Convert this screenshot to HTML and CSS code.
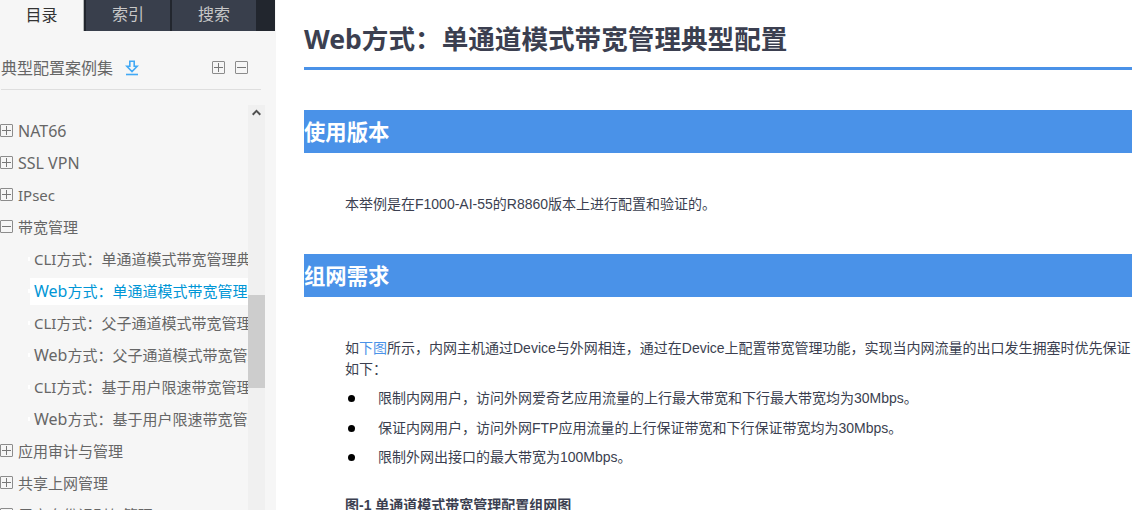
FILE: index.html
```
<!DOCTYPE html>
<html lang="zh-CN">
<head>
    <meta charset="UTF-8">
    <title>Web方式：单通道模式带宽管理典型配置</title>
    <link rel="stylesheet" href="styles.css">
</head>
<body>

<!-- Left navigation -->
<aside class="sidebar">
    <ul class="tabs">
        <li class="active">目录</li>
        <li>索引</li>
        <li>搜索</li>
    </ul>

    <div class="book">
        <span class="book-name">典型配置案例集</span>
        <svg class="download" width="14" height="16" viewBox="0 0 14 16" fill="none" stroke="#42a9f5" stroke-width="1.6">
            <path d="M4.8 1.3h4.4v5h3L7 11.6 1.8 6.300h3z"/>
            <path d="M1 14.500h12"/>
        </svg>
        <span class="box plus"></span>
        <span class="box"></span>
    </div>

    <div class="tree-wrap">
        <ul class="tree">
            <li><span class="box plus"></span><a class="en">NAT66</a></li>
            <li><span class="box plus"></span><a class="en">SSL VPN</a></li>
            <li><span class="box plus"></span><a>IPsec</a></li>
            <li><span class="box"></span><a>带宽管理</a></li>
            <li class="sub"><a>CLI方式：单通道模式带宽管理典</a></li>
            <li class="sub current"><a><span class="en">Web</span>方式：单通道模式带宽管理</a></li>
            <li class="sub"><a>CLI方式：父子通道模式带宽管理</a></li>
            <li class="sub"><a><span class="en">Web</span>方式：父子通道模式带宽管理</a></li>
            <li class="sub"><a>CLI方式：基于用户限速带宽管理</a></li>
            <li class="sub"><a><span class="en">Web</span>方式：基于用户限速带宽管理</a></li>
            <li><span class="box plus"></span><a>应用审计与管理</a></li>
            <li><span class="box plus"></span><a>共享上网管理</a></li>
            <li><span class="box plus"></span><a>用户身份识别与管理</a></li>
        </ul>
        <div class="scrollbar">
            <svg class="arrow" width="9" height="7" viewBox="0 0 9 7" fill="none" stroke="#505050" stroke-width="2">
                <path d="M0.700 5.700L4.500 1.900 8.300 5.700"/>
            </svg>
            <div class="thumb"></div>
        </div>
    </div>
</aside>

<!-- Article -->
<main class="content">
    <h1>Web方式：单通道模式带宽管理典型配置</h1>

    <h2>使用版本</h2>
    <p>本举例是在F1000-AI-55的R8860版本上进行配置和验证的。</p>

    <h2>组网需求</h2>
    <p>如<a href="#fig1">下图</a>所示，内网主机通过Device与外网相连，通过在Device上配置带宽管理功能，实现当内网流量的出口发生拥塞时优先保证<br>如下：</p>
    <ul class="needs">
        <li>限制内网用户，访问外网爱奇艺应用流量的上行最大带宽和下行最大带宽均为30Mbps。</li>
        <li>保证内网用户，访问外网FTP应用流量的上行保证带宽和下行保证带宽均为30Mbps。</li>
        <li>限制外网出接口的最大带宽为100Mbps。</li>
    </ul>
    <h5 id="fig1">图-1 单通道模式带宽管理配置组网图</h5>
</main>

</body>
</html>
```
FILE: styles.css
```
* {
    box-sizing: border-box;
}

body {
    margin: 0;
    height: 510px;
    display: flex;
    overflow: hidden;
    background-color: #fff;
    font-family: "Liberation Sans", "Noto Sans CJK SC", sans-serif;
}

ul {
    list-style: none;
    margin: 0;
    padding: 0;
}

/* Sidebar */
.sidebar {
    width: 276px;
    flex-shrink: 0;
    display: flex;
    flex-direction: column;
    background-color: #f6f6f6;
    color: #666;
    font-family: "Noto Sans", "Noto Sans CJK SC", sans-serif;
}

.tabs {
    display: flex;
    width: 275px;
    height: 31px;
    flex-shrink: 0;
    background-color: #22262e;
    color: #c8c8c8;
    font-size: 16px;
    line-height: 29px;
    text-align: center;
}

.tabs li {
    width: 84px;
    margin-left: 2px;
    background-color: #393f4c;
}

.tabs li.active {
    margin-left: 0;
    border-right: 1px solid #b5b8b8;
    background-color: #f6f6f6;
    color: #333;
    line-height: 31px;
}

.book {
    display: flex;
    align-items: center;
    width: 260px;
    height: 59px;
    flex-shrink: 0;
    margin-left: 1px;
    padding: 15px 13px 0 0;
    border-bottom: 1px solid #dedede;
    font-size: 16px;
}

.book-name {
    margin-top: -2px;
}

.download {
    margin-left: 12px;
    margin-right: auto;
}

.box {
    position: relative;
    width: 13px;
    height: 13px;
    flex-shrink: 0;
    border: 1px solid #8c8c8c;
    border-radius: 1px;
}

.book .box + .box {
    margin-left: 10px;
}

/* Horizontal and vertical strokes of the toggle */
.box::before,
.box.plus::after {
    content: "";
    position: absolute;
    left: 1px;
    top: 5px;
    width: 9px;
    height: 1px;
    background-color: #777;
}

.box.plus::after {
    left: 5px;
    top: 1px;
    width: 1px;
    height: 9px;
}

/* Tree */
.tree-wrap {
    display: flex;
    flex: 1;
    min-height: 0;
    width: 265px;
    margin-top: 15px;
}

.tree {
    width: 248px;
    padding-top: 10px;
    overflow: hidden;
    font-size: 15px;
}

.tree li {
    display: flex;
    align-items: center;
    height: 32px;
    white-space: nowrap;
}

.tree a {
    line-height: 32px;
}

.tree .en {
    font-size: 16px;
}

.tree .box {
    margin-right: 5px;
    margin-top: -2px;
}

.tree .sub {
    padding-left: 28px;
}

.tree .sub::before {
    content: "";
    width: 2px;
    height: 4px;
    flex-shrink: 0;
    background-color: #fff;
}

.tree .sub a {
    flex: 1;
    height: 27px;
    line-height: 27px;
    padding-left: 4px;
}

.tree .sub .en {
    line-height: 20px;
}

.tree .current a {
    background-color: #fff;
    color: #0096d6;
}

.scrollbar {
    width: 17px;
    background-color: #f0f0f0;
}

.arrow {
    display: block;
    margin: 4px 0 0 4px;
}

.thumb {
    height: 93px;
    margin-top: 179px;
    background-color: #cdcdcd;
}

/* Article */
.content {
    flex: 1;
    min-width: 0;
    padding-left: 28px;
    color: #3b3f50;
    font-size: 14px;
    line-height: 21px;
    white-space: nowrap;
}

.content h1 {
    height: 70px;
    margin: 0 0 40px;
    padding-top: 19px;
    border-bottom: 3px solid #4a92e8;
    font-family: "Noto Sans", "Noto Sans CJK SC", sans-serif;
    font-size: 26.6px;
    line-height: 40px;
}

.content h2 {
    height: 43px;
    margin: 0 0 41px;
    background-color: #4a92e8;
    color: #fff;
    font-size: 21.33px;
    line-height: 47px;
}

.content p {
    margin: 0 0 39px 41px;
}

.content a {
    color: #4a92e8;
    text-decoration: none;
}

.content h2 + p + ul {
    margin-top: -31px;
}

.needs li {
    display: flex;
    align-items: center;
    margin: 0 0 8.5px 44px;
}

.needs li::before {
    content: "";
    width: 7px;
    height: 7px;
    margin-right: 23px;
    border-radius: 50%;
    background-color: #000;
}

.content h5 {
    margin: 27px 0 0 41px;
    font-size: 14px;
}
```
